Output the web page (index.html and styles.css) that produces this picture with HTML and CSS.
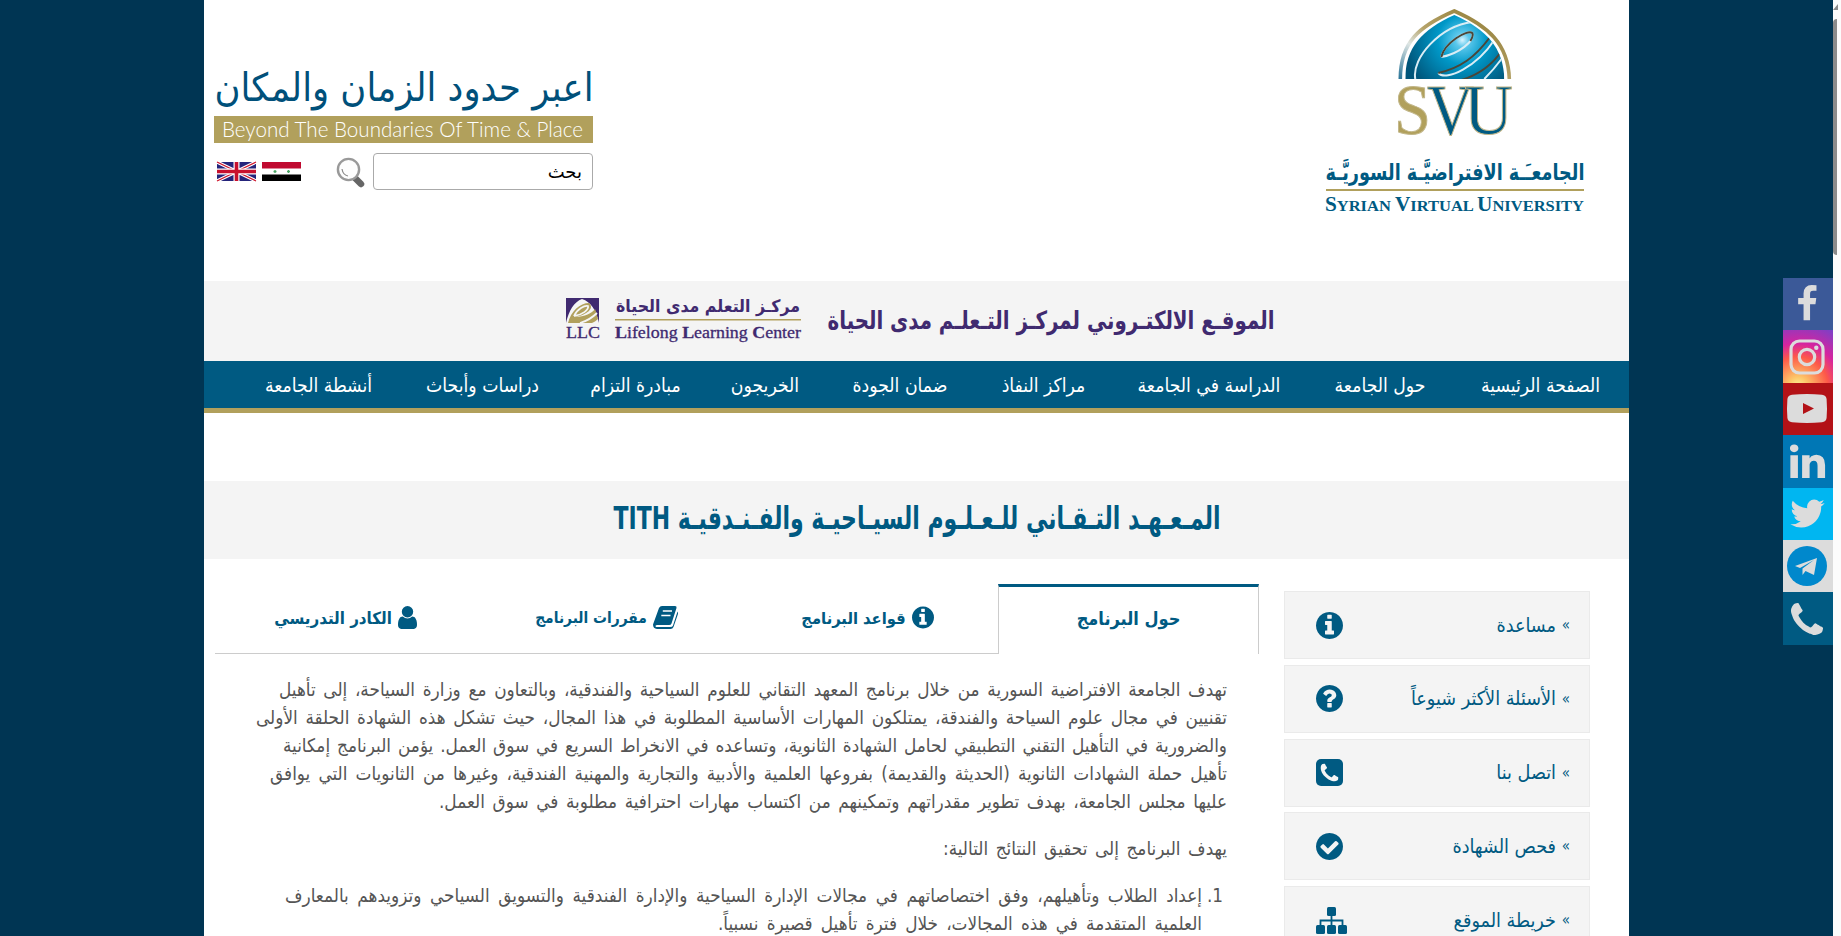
FILE: index.html
```html
<!DOCTYPE html>
<html lang="ar" dir="rtl">
<head>
<meta charset="utf-8">
<title>الجامعة الافتراضية السورية</title>
<link rel="stylesheet" href="styles.css">
</head>
<body>
<svg class="defs" aria-hidden="true">
  <defs>
    <symbol id="i-info" viewBox="128 128 1536 1536"><path d="M1152 1376v-160q0-14-9-23t-23-9h-96v-512q0-14-9-23t-23-9h-320q-14 0-23 9t-9 23v160q0 14 9 23t23 9h96v320h-96q-14 0-23 9t-9 23v160q0 14 9 23t23 9h448q14 0 23-9t9-23zm-128-896v-160q0-14-9-23t-23-9h-192q-14 0-23 9t-9 23v160q0 14 9 23t23 9h192q14 0 23-9t9-23zm640 416q0 209-103 385.5t-279.5 279.5-385.5 103-385.5-103-279.5-279.5-103-385.5 103-385.5 279.5-279.5 385.5-103 385.5 103 279.5 279.5 103 385.5z"/></symbol>
    <symbol id="i-question" viewBox="128 128 1536 1536"><path d="M1024 1376v-192q0-14-9-23t-23-9h-192q-14 0-23 9t-9 23v192q0 14 9 23t23 9h192q14 0 23-9t9-23zm256-672q0-88-55.5-163t-138.5-116-170-41q-243 0-371 213-15 24 8 42l132 100q7 6 19 6 16 0 25-12 53-68 86-92 34-24 86-24 48 0 85.5 26t37.5 59q0 38-20 61t-68 45q-63 28-115.5 86.5t-52.5 125.5v36q0 14 9 23t23 9h192q14 0 23-9t9-23q0-19 21.5-49.5t54.5-49.5q32-18 49-28.5t46-35 44.5-48 28-60.5 12.5-81zm384 192q0 209-103 385.5t-279.5 279.5-385.5 103-385.5-103-279.5-279.5-103-385.5 103-385.5 279.5-279.5 385.5-103 385.5 103 279.5 279.5 103 385.5z"/></symbol>
    <symbol id="i-check" viewBox="128 128 1536 1536"><path d="M1412 734q0-28-18-46l-91-90q-19-19-45-19t-45 19l-408 407-226-226q-19-19-45-19t-45 19l-91 90q-18 18-18 46 0 27 18 45l362 362q19 19 45 19 27 0 46-19l543-543q18-18 18-45zm252 162q0 209-103 385.5t-279.5 279.5-385.5 103-385.5-103-279.5-279.5-103-385.5 103-385.5 279.5-279.5 385.5-103 385.5 103 279.5 279.5 103 385.5z"/></symbol>
    <symbol id="i-phone" viewBox="192 128 1408 1408"><path d="M1600 1240q0 27-10 70.5t-21 68.5q-21 50-122 106-94 51-186 51-27 0-53-3.5t-57.5-12.5-47-14.5-55.5-20.5-49-18q-98-35-175-83-127-79-264-216t-216-264q-48-77-83-175-3-9-18-49t-20.5-55.5-14.5-47-12.5-57.5-3.5-53q0-92 51-186 56-101 106-122 25-11 68.5-21t70.5-10q14 0 21 3 18 6 53 76 11 19 30 54t35 63.5 31 53.5q3 4 17.5 25t21.5 35.5 7 28.5q0 20-28.5 50t-62 55-62 53-28.5 46q0 9 5 22.5t8.5 20.5 14 24 11.5 19q76 137 174 235t235 174q2 1 19 11.5t24 14 20.5 8.5 22.5 5q18 0 46-28.5t53-62 55-62 50-28.5q14 0 28.5 7t35.5 21.5 25 17.5q25 15 53.5 31t63.5 35 54 30q70 35 76 53 3 7 3 21z"/></symbol>
    <symbol id="i-user" viewBox="256 128 1280 1536"><path d="M1536 1399q0 109-62.5 187t-150.5 78h-854q-88 0-150.5-78t-62.5-187q0-85 8.5-160.5t31.5-152 58.5-131 94-89 134.5-34.5q131 128 313 128t313-128q76 0 134.5 34.5t94 89 58.5 131 31.5 152 8.5 160.5zm-256-887q0 159-112.5 271.5t-271.5 112.5-271.5-112.5-112.5-271.5 112.5-271.5 271.5-112.5 271.5 112.5 112.5 271.5z"/></symbol>
  </defs>
</svg>

<div class="page">
  <header class="top">
    <svg class="logo" width="262" height="216" viewBox="0 0 262 216">
      <defs>
        <radialGradient id="globe" gradientUnits="userSpaceOnUse" cx="136" cy="40" r="58">
          <stop offset="0" stop-color="#d8f4ff"/><stop offset=".12" stop-color="#5cc8ec"/><stop offset=".42" stop-color="#0098c8"/><stop offset="1" stop-color="#00557a"/>
        </radialGradient>
        <linearGradient id="arch" x1="0" x2="1" y1="1" y2="0">
          <stop offset="0" stop-color="#2c7699"/><stop offset=".3" stop-color="#dfe6e4"/><stop offset=".48" stop-color="#b5a369"/><stop offset="1" stop-color="#8a742b"/>
        </linearGradient>
        <clipPath id="dome"><path d="M79 79C79 48 95 30 128 15C161 30 177 48 178 79Z"/></clipPath>
      </defs>
      <g transform="translate(2.300 0)">
        <path d="M74 79C74 42 93 26 128 11C162 26 182 44 183 79" fill="none" stroke="url(#arch)" stroke-width="3.600"/>
        <g clip-path="url(#dome)">
          <path d="M70 0H190V79H70Z" fill="url(#globe)"/>
          <path d="M89 79C85 58 114 26 146 22" class="orbit w"/>
          <path d="M115 57C118 43 141 29 146 33C149 41 132 54 115 57" class="orbit w"/>
          <path d="M115 57C118 43 141 29 146 33C147 35 146 38 144 41" class="orbit b"/>
          <path d="M112 73C120 82 151 66 168 40" class="orbit w"/>
          <path d="M112 73C134 68 149 57 163 38" class="orbit b"/>
          <path d="M158 79Q167 70 176 58" class="orbit w"/>
          <path d="M135 80C152 75 166 65 176 50" class="orbit b"/>
        </g>
      </g>
      <g class="svu" direction="ltr">
        <text x="70" y="134" fill="#b1a05c" textLength="37" lengthAdjust="spacingAndGlyphs">S</text>
        <text x="103" y="134" textLength="47" lengthAdjust="spacingAndGlyphs">V</text>
        <text x="140" y="134" textLength="49" lengthAdjust="spacingAndGlyphs">U</text>
      </g>
      <text x="131" y="180" text-anchor="middle" direction="rtl" class="logo-ar" textLength="259" lengthAdjust="spacingAndGlyphs">الجامعـَـة الافتراضيَّـة السوريَّـة</text>
      <path d="M2 189H260V191H2Z" fill="#b1a05c"/>
      <text x="1" y="211" direction="ltr" class="logo-en" textLength="259" lengthAdjust="spacingAndGlyphs"><tspan font-size="20">S</tspan>YRIAN <tspan font-size="20">V</tspan>IRTUAL <tspan font-size="20">U</tspan>NIVERSITY</text>
    </svg>

    <div class="tools">
      <svg class="slogan" width="380" height="80" viewBox="0 0 380 80">
        <text x="190" y="37" text-anchor="middle" direction="rtl" class="slogan-ar" textLength="379" lengthAdjust="spacingAndGlyphs">اعبر حدود الزمان والمكان</text>
        <path d="M0 52H379V79H0Z" fill="#b1a05c"/>
        <text x="8" y="73" direction="ltr" class="slogan-en" textLength="361" lengthAdjust="spacingAndGlyphs">Beyond The Boundaries Of Time &amp; Place</text>
      </svg>
      <div class="search-row">
        <div class="search">بحث</div>
        <svg class="lens" width="30" height="32" viewBox="0 0 30 32">
          <path d="M19 21L25 27" stroke="#666" stroke-width="6.500" stroke-linecap="round"/>
          <circle cx="12.500" cy="12.500" r="10.600" fill="#fdfdfd" stroke="#999" stroke-width="2.400"/>
          <path d="M6 12Q7 18 12 19" fill="none" stroke="#888" stroke-width="1.200"/>
        </svg>
        <svg class="flag" width="39" height="19" viewBox="0 0 39 19">
          <path d="M0 0H39V19H0Z" fill="#fff"/><path d="M0 0H39V6.500H0Z" fill="#c00a30"/><path d="M0 12.500H39V19H0Z" fill="#000"/>
          <path d="M11.500 9.500h3M13 8v3M25 9.500h3M26.500 8v3" stroke="#4aa564" stroke-width="1.300"/>
        </svg>
        <svg class="flag" width="39" height="19" viewBox="0 0 39 19">
          <path d="M0 0H39V19H0Z" fill="#25247b"/><path d="M0 0L39 19M39 0L0 19" stroke="#fff" stroke-width="3.400"/><path d="M0 0L39 19M39 0L0 19" stroke="#cf142b" stroke-width="1.300"/>
          <path d="M19.500 0V19M0 9.500H39" stroke="#fff" stroke-width="6"/><path d="M19.500 0V19M0 9.500H39" stroke="#c8102e" stroke-width="3.600"/>
        </svg>
      </div>
    </div>
  </header>

  <div class="llc">
    <svg width="450" height="50" viewBox="0 0 450 50" class="llc-title"><text x="225" y="33" text-anchor="middle" direction="rtl" textLength="447" lengthAdjust="spacingAndGlyphs">الموقـع الالكتـروني لمركـز التـعلـم مدى الحياة</text></svg>
    <svg width="238" height="50" viewBox="0 0 238 50" class="llc-logo">
      <path d="M1 2H34V27H1Z" fill="#402a70"/>
      <path d="M1 27C4 14 9 6 17 3C26 6 31 14 34 27Z" fill="#f5f5f5"/>
      <path d="M3 27C6 15 15 7 24 7C30 12 22 19 10 21C20 21 27 17 30 13C32 18 32 20 33 23C31 25 29 26 27 27Z" fill="#b1a05c"/>
      <path d="M9 20C12 13 20 9 23 10C24 14 17 19 9 20M15 27C22 25 28 21 32 17" fill="none" stroke="#f5f5f5" stroke-width="1.800"/>
      <text x="1" y="42" direction="ltr" class="llc-serif" textLength="34" lengthAdjust="spacingAndGlyphs">LLC</text>
      <text x="143" y="16" text-anchor="middle" direction="rtl" class="llc-ar" textLength="184" lengthAdjust="spacingAndGlyphs">مركـز التعلم مدى الحياة</text>
      <path d="M50 23H236V24.500H50Z" fill="#b1a05c"/>
      <text x="50" y="42" direction="ltr" class="llc-serif" textLength="186" lengthAdjust="spacingAndGlyphs"><tspan class="cap">L</tspan>ifelong <tspan class="cap">L</tspan>earning <tspan class="cap">C</tspan>enter</text>
    </svg>
  </div>

  <nav class="nav">
    <a class="n1">الصفحة الرئيسية</a><a class="n2">حول الجامعة</a><a class="n3">الدراسة في الجامعة</a><a class="n4">مراكز النفاذ</a><a class="n5">ضمان الجودة</a><a class="n6">الخريجون</a><a class="n7">مبادرة التزام</a><a class="n8">دراسات وأبحاث</a><a class="n9">أنشطة الجامعة</a>
  </nav>

  <h1 class="title">
    <svg width="610" height="60" viewBox="0 0 610 60"><text x="305" y="39" text-anchor="middle" direction="rtl" textLength="607" lengthAdjust="spacingAndGlyphs">المـعـهـد التـقـاني للـعـلـوم السيـاحيـة والفـنـدقيـة TITH</text></svg>
  </h1>

  <div class="columns">
    <aside class="side">
      <a><span>»</span><b>مساعدة</b><svg width="27" height="27"><use href="#i-info"/></svg></a>
      <a><span>»</span><b>الأسئلة الأكثر شيوعاً</b><svg width="27" height="27"><use href="#i-question"/></svg></a>
      <a><span>»</span><b>اتصل بنا</b><svg width="27" height="27" viewBox="0 0 27 27"><rect width="27" height="27" rx="5"/><use href="#i-phone" x="4.500" y="4.500" width="18" height="18" fill="#f5f5f5"/></svg></a>
      <a><span>»</span><b>فحص الشهادة</b><svg width="27" height="27"><use href="#i-check"/></svg></a>
      <a><span>»</span><b>خريطة الموقع</b><svg width="31" height="27" viewBox="0 0 31 27"><rect x="11" width="9" height="9" rx="1.500"/><rect y="18" width="9" height="9" rx="1.500"/><rect x="11" y="18" width="9" height="9" rx="1.500"/><rect x="22" y="18" width="9" height="9" rx="1.500"/><path d="M4.500 19V13.500H26.500V19M15.500 8V19" fill="none" stroke="#005a82" stroke-width="1.800"/></svg></a>
    </aside>
    <main class="main">
      <div class="tabs">
        <div class="tab active"><b>حول البرنامج</b></div>
        <div class="tab rules"><svg width="22" height="23"><use href="#i-info"/></svg><b>قواعد البرنامج</b></div>
        <div class="tab courses"><svg width="25" height="23" viewBox="0 0 25 23"><path d="M9 0H22Q24 0 23.500 2L18.500 17.500Q18 19 16 19H4Q2 19 2.500 20.500Q3 21 4 21H17Q19.500 21 20 19.500L24.500 5.500Q25.500 7 24.800 8.500L20.500 21Q19.700 23 17.500 23H4Q0 22.500 0 18.500L6 2Q7 0 9 0Z"/><path d="M9.800 5H19M8.300 9.500H17.500" stroke="#fff" stroke-width="1.700"/></svg><b>مقررات البرنامج</b></div>
        <div class="tab staff"><svg width="19" height="23"><use href="#i-user"/></svg><b>الكادر التدريسي</b></div>
      </div>
      <div class="copy">
        <p>
          <span class="l1">تهدف الجامعة الافتراضية السورية من خلال برنامج المعهد التقاني للعلوم السياحية والفندقية، وبالتعاون مع وزارة السياحة، إلى تأهيل</span>
          <span class="l2">تقنيين في مجال علوم السياحة والفندقة، يمتلكون المهارات الأساسية المطلوبة في هذا المجال، حيث تشكل هذه الشهادة الحلقة الأولى</span>
          <span class="l3">والضرورية في التأهيل التقني التطبيقي لحامل الشهادة الثانوية، وتساعده في الانخراط السريع في سوق العمل. يؤمن البرنامج إمكانية</span>
          <span class="l4">تأهيل حملة الشهادات الثانوية (الحديثة والقديمة) بفروعها العلمية والأدبية والتجارية والمهنية الفندقية، وغيرها من الثانويات التي يوافق</span>
          <span class="l5">عليها مجلس الجامعة، بهدف تطوير مقدراتهم وتمكينهم من اكتساب مهارات احترافية مطلوبة في سوق العمل.</span>
        </p>
        <p><span class="l6">يهدف البرنامج إلى تحقيق النتائج التالية:</span></p>
        <div class="item"><i>1.</i><div>
          <span class="l7">إعداد الطلاب وتأهيلهم، وفق اختصاصاتهم في مجالات الإدارة السياحية والإدارة الفندقية والتسويق السياحي وتزويدهم بالمعارف</span>
          <span class="l8">العلمية المتقدمة في هذه المجالات، خلال فترة تأهيل قصيرة نسبياً.</span>
        </div></div>
      </div>
    </main>
  </div>
</div>

<div class="social">
  <a class="fb"><svg width="38" height="38" viewBox="0 0 1792 1792"><path d="M1343 12v264h-157q-86 0-116 36t-30 108v189h293l-39 296h-254v759h-306v-759h-255v-296h255v-218q0-186 104-288.500t277-102.500q147 0 228 12z"/></svg></a>
  <a class="ig"><svg width="36" height="36" viewBox="0 0 36 36"><rect x="2" y="2" width="32" height="32" rx="8.500" fill="none" stroke="#dcdcdc" stroke-width="3.200"/><circle cx="18" cy="18" r="7.700" fill="none" stroke="#dcdcdc" stroke-width="3.200"/><circle cx="27.300" cy="8.700" r="2.200"/></svg></a>
  <a class="yt"><svg width="40" height="29" viewBox="0 0 40 29"><path d="M5 .8Q20-.8 35 .8Q39 1.200 39.600 5Q40.400 14.500 39.600 24Q39 27.800 35 28.200Q20 29.800 5 28.200Q1 27.800.4 24Q-.4 14.500.4 5Q1 1.200 5 .8ZM16 9V20L27 14.500Z" fill-rule="evenodd"/></svg></a>
  <a class="in"><svg width="41" height="41" viewBox="0 0 1792 1792"><path d="M477 625v991h-330v-991h330zm21-306q1 73-50.500 122t-135.500 49h-2q-82 0-132-49t-50-122q0-74 51.500-122.500t134.500-48.500 133 48.500 51 122.500zm1166 729v568h-329v-530q0-105-40.500-164.500t-126.500-59.500q-63 0-105.500 34.500t-63.500 85.500q-11 30-11 81v553h-329q2-399 2-647t-1-296l-1-48h329v144h-2q20-32 41-56t56.500-52 87-43.500 114.500-15.500q171 0 275 113.500t104 332.500z"/></svg></a>
  <a class="tw"><svg width="39" height="39" viewBox="0 0 1792 1792"><path d="M1684 408q-67 98-162 167 1 14 1 42 0 130-38 259.500t-115.500 248.500-184.500 210.500-258 146-323 54.500q-271 0-496-145 35 4 78 4 225 0 401-138-105-2-188-64.500t-114-159.500q33 5 61 5 43 0 85-11-112-23-185.500-111.500t-73.500-205.500v-4q68 38 146 41-66-44-105-115t-39-154q0-88 44-163 121 149 294.500 238.500t371.500 99.500q-8-38-8-74 0-134 94.500-228.500t228.500-94.500q140 0 236 102 109-21 205-78-37 115-142 178 93-10 186-50z"/></svg></a>
  <a class="tg"><svg width="40" height="40" viewBox="0 0 40 40"><circle cx="20" cy="20" r="20" fill="#0088cc"/><path d="M30 12L27 29L18.500 25L15.500 29V22.500L27 14L13 22L8 20Z"/></svg></a>
  <a class="ph"><svg width="32" height="32"><use href="#i-phone"/></svg></a>
</div>
<div class="scroll"><svg width="5" height="6" viewBox="0 0 5 6"><path d="M5 0L0 6H5Z"/></svg><i></i></div>
</body>
</html>
```

FILE: styles.css
```css
* { box-sizing: border-box; }
html, body { margin: 0; height: 936px; overflow: hidden; }
body { position: relative; background: #003553; font-family: "DejaVu Sans Condensed", "DejaVu Sans", sans-serif; color: #005a82; }
svg { display: block; flex: none; fill: #005a82; overflow: visible; }
.defs { position: absolute; width: 0; height: 0; overflow: hidden; }
.page { width: 1425px; height: 936px; margin-right: 212px; background: #fff; overflow: hidden; }
.top { height: 281px; display: flex; justify-content: space-between; padding: 0 43px 0 10px; }
.orbit { fill: none; stroke-width: 2; }
.orbit.w { stroke: #d9edf5; }
.orbit.b { stroke: #4a4638; }
.svu { font: 72px "Liberation Serif", serif; stroke: #c2b78a; stroke-width: 1; }
.logo-ar { font: bold 23px "DejaVu Sans", sans-serif; }
.logo-en { font: bold 15.5px "Liberation Serif", serif; }
.tools { padding-top: 64px; width: 380px; }
.slogan-ar { font: 39px "DejaVu Sans", sans-serif; fill: #00507a; }
.slogan-en { font: 300 22px Lato, sans-serif; fill: #fff; }
.search-row { display: flex; align-items: flex-start; padding-top: 9px; padding-right: 1px; }
.search { flex: none; width: 220px; height: 37px; border: 1px solid #aaa; border-radius: 4px; padding: 6px 10px; font: 18px/23px "DejaVu Sans", sans-serif; color: #000; }
.lens { margin: 4px 7px 0 35px; }
.flag { margin: 9px 0 0 6px; }
.llc { height: 80px; background: #f4f4f4; display: flex; justify-content: center; gap: 23px; padding: 15px 0 0 7px; }
.llc-title { font: bold 25px "DejaVu Sans Condensed", sans-serif; fill: #402a70; }
.llc-serif { font-family: "Liberation Serif", serif; fill: #402a70; stroke: #402a70; stroke-width: .3; font-size: 17px; }
.cap { font-weight: bold; }
.llc-ar { font: bold 17px "DejaVu Sans", sans-serif; fill: #402a70; }
.nav { height: 52px; background: #005a82; border-bottom: 5px solid #b1a05c; display: flex; padding-right: 28px; gap: 54px; color: #fff; font-size: 19.2px; line-height: 50px; white-space: nowrap; }
.nav a { display: flex; justify-content: center; flex: none; }
.n1 { width: 121px; }
.n2 { width: 92px; }
.n3 { width: 142px; }
.n4 { width: 81px; }
.n5 { width: 98px; }
.n6 { width: 64px; }
.n7 { width: 87px; }
.n8 { width: 111px; }
.n9 { width: 109px; }
.title { margin: 68px 0 0; height: 78px; background: #f4f4f4; display: flex; justify-content: center; padding-top: 9px; font: bold 32px "DejaVu Sans Condensed", sans-serif; }
.columns { display: flex; padding-right: 39px; }
.side { width: 306px; padding-top: 32px; display: flex; flex-direction: column; gap: 5.8px; }
.side a { height: 68px; border: 1px solid #eaeaea; background: #f4f4f4; display: flex; align-items: center; padding: 0 19px 0 31px; font-size: 19.6px; }
.side span { width: 14px; font-size: 15px; }
.side b { font-weight: normal; flex: 1; white-space: nowrap; }
.main { width: 1044px; margin-right: 25px; padding-top: 25px; }
.tabs { display: flex; height: 70px; border-bottom: 1px solid #ccc; }
.tab { width: 261px; height: 70px; display: flex; align-items: center; justify-content: center; gap: 6px; font-size: 17px; white-space: nowrap; padding-bottom: 2px; }
.tab svg { margin-bottom: 2px; }
.tab.active { border: 1px solid #ccc; border-top: 3px solid #005a82; border-bottom: 0; background: #fff; font-size: 18px; padding-bottom: 5px; }
.tab.rules { font-size: 16.4px; }
.tab.courses { font-size: 15.4px; }
.tab.staff { font-size: 16.8px; }
.copy { padding: 22px 32px 0 0; color: #555; font-size: 18.8px; line-height: 28px; }
.copy p { margin: 0 0 19px; }
.copy span { display: block; text-align: justify; text-align-last: justify; white-space: nowrap; }
.l1 { width: 948px; }
.l2 { width: 971px; }
.l3 { width: 944px; }
.l4 { width: 957px; }
.l5 { width: 788px; }
.l6 { width: 284px; }
.l7 { width: 917px; }
.l8 { width: 484px; }
.item { display: flex; }
.item i { font-style: normal; width: 25px; padding-right: 4px; flex: none; }
.social { position: absolute; left: 1783px; top: 278px; width: 50px; }
.social a { display: flex; align-items: center; justify-content: center; height: 52.4px; padding-right: 2px; }
.social svg { fill: #dcdcdc; }
.fb { background: #3b5998; }
.ig { background: radial-gradient(circle at 30% 107%, #fdf497 0, #fdc468 15%, #fd5949 45%, #d6249f 65%, #285aeb 130%); }
.yt { background: #b31217; }
.in { background: #0077b5; }
.tw { background: #00b6f1; }
.tg { background: #dcdcdc; }
.ph { background: #005a82; }
.scroll { position: absolute; left: 1833px; top: 0; width: 8px; height: 936px; padding: 4px 0 0 0; background: #fcfcfc; overflow: hidden; display: flex; flex-direction: column; align-items: flex-end; gap: 9px; }
.scroll svg { fill: #8b8b8b; }
.scroll i { width: 4px; height: 236px; border-radius: 4px 0 0 4px; background: #8b8b8b; }
```
